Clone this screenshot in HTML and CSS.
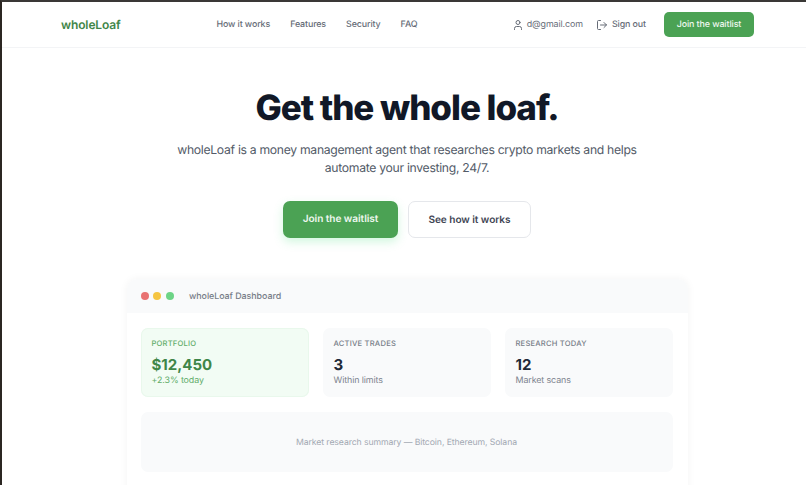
FILE: index.html
```html
<!DOCTYPE html>
<html lang="en">
<head>
<meta charset="utf-8">
<title>wholeLoaf</title>
<link rel="stylesheet" href="styles.css">
</head>
<body>
<header class="topbar">
  <a class="logo">wholeLoaf</a>
  <nav class="nav">
    <a>How it works</a>
    <a>Features</a>
    <a>Security</a>
    <a>FAQ</a>
  </nav>
  <div class="account">
    <span class="acct-item">
      <svg class="icon" viewBox="0 0 24 24" fill="none" stroke="currentColor" stroke-width="2" stroke-linecap="round" stroke-linejoin="round"><path d="M19 21v-2a4 4 0 0 0-4-4H9a4 4 0 0 0-4 4v2"/><circle cx="12" cy="7" r="4"/></svg>
      d@gmail.com
    </span>
    <span class="acct-item signout">
      <svg class="icon" viewBox="0 0 24 24" fill="none" stroke="currentColor" stroke-width="2" stroke-linecap="round" stroke-linejoin="round"><path d="M9 21H5a2 2 0 0 1-2-2V5a2 2 0 0 1 2-2h4"/><path d="M16 17l5-5-5-5"/><path d="M21 12H9"/></svg>
      Sign out
    </span>
    <a class="btn-small">Join the waitlist</a>
  </div>
</header>
<main class="hero">
  <h1>Get the whole loaf.</h1>
  <p class="lead">wholeLoaf is a money management agent that researches crypto markets and helps automate your investing, 24/7.</p>
  <div class="cta">
    <a class="btn-primary">Join the waitlist</a>
    <a class="btn-secondary">See how it works</a>
  </div>
  <section class="window">
    <div class="titlebar">
      <span class="dot red"></span>
      <span class="dot yellow"></span>
      <span class="dot green"></span>
      <span class="wintitle">wholeLoaf Dashboard</span>
    </div>
    <div class="winbody">
      <div class="cards">
        <div class="card card-green">
          <div class="label">PORTFOLIO</div>
          <div class="value">$12,450</div>
          <div class="sub">+2.3% today</div>
        </div>
        <div class="card">
          <div class="label">ACTIVE TRADES</div>
          <div class="value">3</div>
          <div class="sub">Within limits</div>
        </div>
        <div class="card">
          <div class="label">RESEARCH TODAY</div>
          <div class="value">12</div>
          <div class="sub">Market scans</div>
        </div>
      </div>
      <div class="summary">Market research summary — Bitcoin, Ethereum, Solana</div>
    </div>
  </section>
</main>
</body>
</html>
```
FILE: styles.css
```css
* { box-sizing: border-box; }
html { height: 100%; overflow: hidden; }
body {
  margin: 0;
  height: 485px;
  overflow: hidden;
  background: #fff;
  border-top: 2px solid #3a3836;
  border-left: 2px solid #2b2622;
  font-family: Inter, "Liberation Sans", sans-serif;
  color: #111827;
  text-rendering: geometricPrecision;
}
.topbar {
  height: 46px;
  display: flex;
  align-items: center;
  padding: 0 52px 0 59px;
  border-bottom: 1px solid #f3f4f6;
  position: relative;
}
.logo {
  font-size: 12px;
  font-weight: 600;
  letter-spacing: -0.12px;
  color: #3f8648;
  width: 156px;
}
.nav {
  display: flex;
  gap: 20px;
  font-size: 8.9px;
  letter-spacing: -0.12px;
  font-weight: 500;
  color: #666c77;
  margin-left: -0.5px;
}
.account {
  margin-left: auto;
  display: flex;
  align-items: center;
  font-size: 8.9px;
  letter-spacing: -0.1px;
  color: #666c77;
}
.acct-item {
  display: flex;
  align-items: center;
  gap: 3px;
  font-weight: 400;
}
.signout { margin-left: 13.5px; font-weight: 500; gap: 3.5px; }
.icon { width: 12px; height: 12px; }
.btn-small {
  margin-left: 18px;
  width: 90px;
  height: 25px;
  display: flex;
  align-items: center;
  justify-content: center;
  background: #4ba254;
  color: #eef7ef;
  border-radius: 5px;
  font-weight: 500;
}
.hero {
  display: flex;
  flex-direction: column;
  align-items: center;
  padding: 39px 0 0 6px;
}
h1 {
  margin: 0;
  font-size: 35px;
  line-height: 42px;
  font-weight: 800;
  letter-spacing: -1.03px;
  color: #111827;
  white-space: nowrap;
}
.lead {
  margin: 12px 0 0;
  width: 480px;
  text-align: center;
  font-size: 12.2px;
  letter-spacing: -0.3px;
  line-height: 18px;
  color: #535b68;
}
.cta {
  margin-top: 24px;
  display: flex;
  gap: 10px;
}
.btn-primary, .btn-secondary {
  height: 37px;
  display: flex;
  align-items: center;
  justify-content: center;
  border-radius: 7px;
  font-size: 10.1px;
  letter-spacing: -0.05px;
  font-weight: 600;
}
.btn-primary {
  width: 115px;
  padding-bottom: 2px;
  background: #4ba254;
  color: #eef7ef;
  box-shadow: 0 4px 10px rgba(74, 222, 128, .25);
}
.btn-secondary {
  width: 123px;
  background: #fff;
  border: 1px solid #e5e7eb;
  color: #3f4654;
}
.window {
  margin-top: 41px;
  width: 561px;
  height: 300px;
  flex: none;
  border-radius: 10px;
  background: #fff;
  box-shadow: 0 0 8px rgba(17, 24, 39, .05);
  overflow: hidden;
}
.titlebar {
  height: 34px;
  display: flex;
  align-items: center;
  gap: 4.5px;
  padding-left: 14px;
  background: #f9fafb;
}
.dot { width: 8px; height: 8px; border-radius: 50%; }
.red { background: #e87272; }
.yellow { background: #f5c542; }
.green { background: #6dd486; }
.wintitle {
  margin-left: 11px;
  font-size: 8.9px;
  letter-spacing: -0.05px;
  font-weight: 500;
  color: #777d88;
}
.winbody {
  padding: 15px 15px 0 14px;
}
.cards {
  display: grid;
  grid-template-columns: repeat(3, 1fr);
  gap: 14px;
}
.card {
  height: 69px;
  padding: 11px 11px 0;
  border-radius: 7px;
  background: #f9fafb;
}
.card-green { background: #f2fcf4; box-shadow: inset 0 0 0 1px #e9f8ec; }
.label {
  font-size: 7.6px;
  line-height: 10px;
  font-weight: 500;
  letter-spacing: .2px;
  color: #777d88;
}
.value {
  margin-top: 6px;
  font-size: 15px;
  line-height: 20px;
  font-weight: 700;
  color: #1f2937;
}
.sub {
  font-size: 8.9px;
  letter-spacing: -0.1px;
  line-height: 12px;
  color: #7d838e;
}
.card-green .label, .card-green .sub { color: #62ad6a; }
.card-green .value { color: #3f8648; }
.summary {
  margin-top: 15px;
  padding-top: 1px;
  height: 60px;
  display: flex;
  align-items: center;
  justify-content: center;
  border-radius: 7px;
  background: #f9fafb;
  font-size: 8.7px;
  letter-spacing: -0.1px;
  color: #a3a9b3;
}
```
